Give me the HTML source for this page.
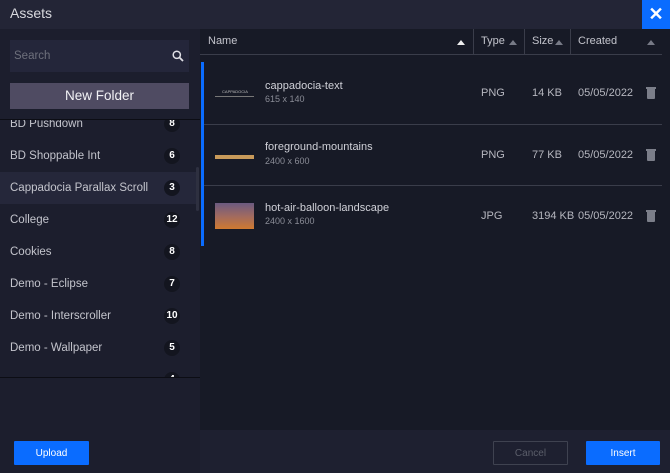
<!DOCTYPE html>
<html><head><style>
*{margin:0;padding:0;box-sizing:border-box}
body{width:670px;height:473px;overflow:hidden;background:#171a26;font-family:"Liberation Sans",sans-serif;position:relative;color:#c8c9d0}
.a{position:absolute}
.top{left:0;top:0;width:670px;height:29px;background:#232536}
.close{left:642px;top:0;width:28px;height:29px;background:#0a6cff;color:#fff;font-size:18px;font-weight:bold;text-align:center;line-height:29px}
.left{left:0;top:29px;width:200px;height:401px;background:#1c1e2d;overflow:hidden}
.item{position:absolute;left:0;width:196px;height:32px;font-size:11.5px;line-height:32px;padding-left:10px;color:#c3c4cc}
.badge{position:absolute;right:16px;top:8px;width:16px;height:16px;border-radius:8px;background:#13151f;color:#fff;font-size:10px;font-weight:bold;text-align:center;line-height:16px}
.hdr{font-size:11px;color:#c3c4cc;top:35px}
.tri{position:absolute;top:40px;width:0;height:0;border-left:4px solid transparent;border-right:4px solid transparent;border-bottom:5px solid #777a86}
.row{left:204px;width:458px;border-bottom:1px solid #3a3d4a}
.nm{font-size:11px;color:#d0d1d8}
.sub{font-size:9px;color:#8a8c96}
.cell{font-size:11px;color:#b6b7bf}
.trash{width:8px;height:10px;background:#7b7e89;border-radius:0 0 1px 1px}
.trash:before{content:"";position:absolute;left:-1px;top:-2px;width:10px;height:2px;background:#7b7e89}
.btn{height:24px;font-size:10px;color:#fff;text-align:center;line-height:24px;border-radius:1px}
</style></head><body>
<div class="a top"></div>
<div class="a" style="left:10px;top:5px;font-size:14px;color:#d8d9de">Assets</div>
<div class="a close">✕</div>

<div class="a left">
 <div class="item" style="top:79px">BD Pushdown<div class="badge">8</div></div>
 <div class="item" style="top:111px">BD Shoppable Int<div class="badge">6</div></div>
 <div class="item" style="top:143px;background:#25273a">Cappadocia Parallax Scroll<div class="badge">3</div></div>
 <div class="item" style="top:175px">College<div class="badge">12</div></div>
 <div class="item" style="top:207px">Cookies<div class="badge">8</div></div>
 <div class="item" style="top:239px">Demo - Eclipse<div class="badge">7</div></div>
 <div class="item" style="top:271px">Demo - Interscroller<div class="badge">10</div></div>
 <div class="item" style="top:303px">Demo - Wallpaper<div class="badge">5</div></div>
 <div class="item" style="top:335px">&nbsp;<div class="badge">4</div></div>
 <div class="a" style="left:0;top:0;width:200px;height:91px;background:#1c1e2d;border-bottom:1px solid #0c0d14"></div>
 <div class="a" style="left:0;top:348px;width:200px;height:53px;background:#1c1e2d;border-top:1px solid #0c0d14"></div>
 <div class="a" style="left:196px;top:138px;width:3px;height:44px;background:#2e3040;border-radius:2px"></div>
</div>
<div class="a" style="left:10px;top:40px;width:179px;height:32px;background:#24263a"></div>
<div class="a" style="left:14px;top:50px;font-size:11.5px;color:#6e707c">Search</div>
<svg class="a" style="left:172px;top:50px" width="12" height="12" viewBox="0 0 12 12"><circle cx="4.8" cy="4.8" r="3.6" stroke="#e0e0e6" stroke-width="1.5" fill="none"/><path d="M7.5 7.5L11 11" stroke="#e0e0e6" stroke-width="1.8"/></svg>
<div class="a" style="left:10px;top:83px;width:179px;height:26px;background:#4f4b62;color:#f2f2f5;font-size:13.5px;text-align:center;line-height:26px">New Folder</div>

<div class="a hdr" style="left:208px">Name</div>
<span class="tri" style="left:457px;border-bottom-color:#eee"></span>
<div class="a" style="left:473px;top:29px;width:1px;height:26px;background:#3a3d4a"></div>
<div class="a hdr" style="left:481px">Type</div><span class="tri" style="left:509px"></span>
<div class="a" style="left:524px;top:29px;width:1px;height:26px;background:#3a3d4a"></div>
<div class="a hdr" style="left:532px">Size</div><span class="tri" style="left:555px"></span>
<div class="a" style="left:570px;top:29px;width:1px;height:26px;background:#3a3d4a"></div>
<div class="a hdr" style="left:578px">Created</div><span class="tri" style="left:647px"></span>
<div class="a" style="left:200px;top:54px;width:462px;height:1px;background:#3a3d4a"></div>

<div class="a" style="left:201px;top:62px;width:3px;height:184px;background:#0a6cff"></div>
<div class="a row" style="top:55px;height:70px"></div>
<div class="a row" style="top:125px;height:61px"></div>

<div class="a" style="left:216px;top:89px;width:38px;font-size:4px;color:#bbb;text-align:center">CAPPADOCIA</div>
<div class="a" style="left:215px;top:96px;width:39px;height:1px;background:#777"></div>
<div class="a nm" style="left:265px;top:80px">cappadocia-text</div>
<div class="a sub" style="left:265px;top:94px">615 x 140</div>
<div class="a cell" style="left:481px;top:87px">PNG</div>
<div class="a cell" style="left:532px;top:87px">14 KB</div>
<div class="a cell" style="left:578px;top:87px">05/05/2022</div>
<div class="a trash" style="left:647px;top:89px"></div>

<div class="a" style="left:215px;top:155px;width:39px;height:4px;background:#c89a5a"></div>
<div class="a nm" style="left:265px;top:141px">foreground-mountains</div>
<div class="a sub" style="left:265px;top:156px">2400 x 600</div>
<div class="a cell" style="left:481px;top:149px">PNG</div>
<div class="a cell" style="left:532px;top:149px">77 KB</div>
<div class="a cell" style="left:578px;top:149px">05/05/2022</div>
<div class="a trash" style="left:647px;top:151px"></div>

<div class="a" style="left:215px;top:203px;width:39px;height:26px;background:linear-gradient(#6b5a80,#a06a60 50%,#d07a30)"></div>
<div class="a nm" style="left:265px;top:202px">hot-air-balloon-landscape</div>
<div class="a sub" style="left:265px;top:216px">2400 x 1600</div>
<div class="a cell" style="left:481px;top:210px">JPG</div>
<div class="a cell" style="left:532px;top:210px">3194 KB</div>
<div class="a cell" style="left:578px;top:210px">05/05/2022</div>
<div class="a trash" style="left:647px;top:212px"></div>

<div class="a" style="left:200px;top:430px;width:470px;height:43px;background:#1e2030"></div>
<div class="a" style="left:0;top:430px;width:200px;height:43px;background:#1c1e2d"></div>
<div class="a btn" style="left:14px;top:441px;width:75px;background:#0a6cff;line-height:26px">Upload</div>
<div class="a btn" style="left:493px;top:441px;width:75px;border:1px solid #3f4250;color:#5b5e6a;line-height:24px">Cancel</div>
<div class="a btn" style="left:586px;top:441px;width:74px;background:#0a6cff;line-height:26px">Insert</div>
</body></html>
